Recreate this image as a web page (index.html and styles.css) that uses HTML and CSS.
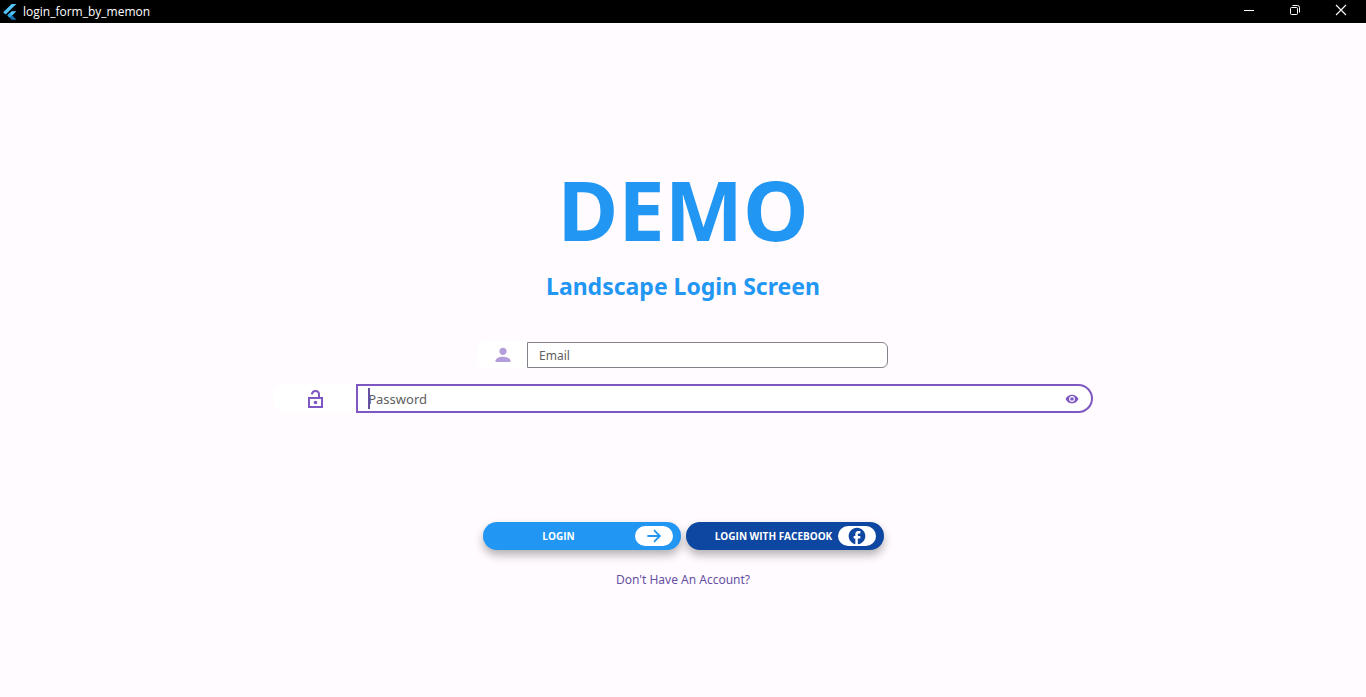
FILE: index.html
```html
<!DOCTYPE html>
<html lang="en">
<head>
<meta charset="utf-8">
<title>login_form_by_memon</title>
<link rel="stylesheet" href="styles.css">
</head>
<body>
<header class="titlebar">
  <svg class="app-logo" width="14" height="16" viewBox="0 0 14 16" aria-hidden="true">
    <path d="M8.6 0H13.4L2.6 10.6L0.2 8.2Z" fill="#54c5f8"/>
    <path d="M8.6 7.2H13.4L9.2 11.4L6.8 13.6L4.4 11.4Z" fill="#54c5f8"/>
    <path d="M6.8 13.8L9.2 11.4L13.4 15.8H8.8Z" fill="#1976b8"/>
    <path d="M4.4 11.4L6.8 9L9.2 11.4L6.8 13.8Z" fill="#29a5ea"/>
  </svg>
  <span class="app-name">login_form_by_memon</span>
  <div class="window-controls">
    <button class="window-button" type="button" aria-label="Minimize">
      <svg width="12" height="12" viewBox="0 0 12 12"><path d="M1 6.5H11" stroke="#fff"/></svg>
    </button>
    <button class="window-button" type="button" aria-label="Restore">
      <svg width="12" height="12" viewBox="0 0 12 12" fill="none" stroke="#fff"><rect x="1.5" y="3.5" width="7" height="7" rx="1"/><path d="M3.5 1.5H8.5Q10.5 1.5 10.5 3.5V8.5"/></svg>
    </button>
    <button class="window-button" type="button" aria-label="Close">
      <svg width="12" height="12" viewBox="0 0 12 12"><path d="M1 1L11 11M11 1L1 11" stroke="#fff" stroke-width="1.1"/></svg>
    </button>
  </div>
</header>
<main class="screen">
  <h1 class="title">DEMO</h1>
  <h2 class="subtitle">Landscape Login Screen</h2>
  <form class="form">
    <div class="field field-email">
      <label class="field-icon" for="email" aria-label="Email">
        <svg width="20" height="20" viewBox="0 0 24 24" fill="#b39ddb"><path d="M12 12c2.400 0 4.400-2 4.400-4.400S14.400 3.200 12 3.200 7.600 5.200 7.600 7.600 9.600 12 12 12zm0 2c-4.500 0-9 1.800-9 5v1.500h18V19c0-3.200-4.500-5-9-5z"/></svg>
      </label>
      <div class="field-box">
        <input class="field-input" id="email" type="email" placeholder="Email">
      </div>
    </div>
    <div class="field field-password">
      <label class="field-icon" for="password" aria-label="Password">
        <svg width="20" height="20" viewBox="0 0 20 20" fill="none" stroke="#7e57c2" stroke-width="2"><path d="M4 9H17V18H4Z"/><path d="M7 5.500C7 3.500 8.200 2 10.500 2S14 3.500 14 5.500V9"/><circle cx="10.500" cy="13.500" r="1.800" fill="#7e57c2" stroke="none"/></svg>
      </label>
      <div class="field-box">
        <span class="caret"></span>
        <input class="field-input" id="password" type="password" placeholder="Password">
        <button class="reveal" type="button" aria-label="Show password">
          <svg width="14" height="14" viewBox="0 0 24 24" fill="#7e57c2"><path d="M12 4.500C7 4.500 2.730 7.610 1 12c1.730 4.390 6 7.500 11 7.500s9.270-3.110 11-7.500c-1.730-4.390-6-7.500-11-7.500zM12 17c-2.760 0-5-2.240-5-5s2.240-5 5-5 5 2.240 5 5-2.240 5-5 5zm0-8c-1.660 0-3 1.340-3 3s1.340 3 3 3 3-1.340 3-3-1.340-3-3-3z"/></svg>
        </button>
      </div>
    </div>
    <div class="actions">
      <button class="action action-login" type="submit">
        <span class="action-label">LOGIN</span>
        <span class="pill"><svg width="20" height="20" viewBox="0 0 24 24" fill="none" stroke="#2196f3" stroke-width="2.200"><path d="M4 12H19M12 5L19 12L12 19"/></svg></span>
      </button>
      <button class="action action-facebook" type="button">
        <span class="action-label">LOGIN WITH FACEBOOK</span>
        <span class="pill"><svg width="20" height="20" viewBox="0 0 24 24" fill="#0d47a1"><path d="M22 12c0-5.520-4.480-10-10-10S2 6.480 2 12c0 4.840 3.440 8.870 8 9.800V15H8v-3h2V9.500C10 7.570 11.570 6 13.500 6H16v3h-2c-.55 0-1 .45-1 1v2h3v3h-3v6.950c5.050-.5 9-4.760 9-9.950z"/></svg></span>
      </button>
    </div>
  </form>
  <a class="signup" href="#">Don't Have An Account?</a>
</main>
</body>
</html>
```

FILE: styles.css
```css
* {
  box-sizing: border-box;
}

body {
  margin: 0;
  min-height: 100vh;
  display: flex;
  flex-direction: column;
  background: #fffbff;
  font-family: "Noto Sans", "Open Sans", sans-serif;
}

button {
  border: 0;
  padding: 0;
  font: inherit;
  cursor: pointer;
}

svg {
  display: block;
  flex: none;
}

.titlebar {
  display: flex;
  align-items: center;
  gap: 6px;
  height: 23px;
  padding-left: 3px;
  background: #000;
  color: #fff;
}

.app-name {
  flex: 1;
  font-family: "Open Sans", "Noto Sans", sans-serif;
  font-size: 12px;
  line-height: 20px;
}

.window-controls {
  display: flex;
  align-self: stretch;
  padding-right: 2px;
}

.window-button {
  display: flex;
  align-items: flex-start;
  justify-content: center;
  width: 46px;
  padding-top: 4px;
  background: transparent;
}

.screen {
  flex: 1;
  display: flex;
  flex-direction: column;
  align-items: center;
  justify-content: center;
  padding-top: 24px;
}

.title {
  margin: 0;
  color: #2196f3;
  font-size: 83px;
  line-height: 110px;
  font-weight: 700;
}

.subtitle {
  margin: 6px 0 40px;
  color: #2196f3;
  font-size: 23px;
  line-height: 32px;
  font-weight: 700;
}

.form {
  width: 100%;
  display: flex;
  flex-direction: column;
  align-items: center;
}

.field {
  display: flex;
  background: #fff;
}

.field-email {
  width: 30%;
  height: 26px;
  margin-bottom: 16px;
  border-radius: 6px;
  font-size: 12px;
}

.field-password {
  width: 60%;
  height: 29px;
  border-radius: 15px;
  font-size: 13px;
}

.field-icon {
  display: flex;
  align-items: center;
  justify-content: center;
  width: 49px;
}

.field-password .field-icon {
  width: 83px;
}

.field-box {
  position: relative;
  flex: 1;
  display: flex;
  align-items: center;
  padding-left: 11px;
  border: 1px solid #85808a;
  border-radius: 0 6px 6px 0;
}

.field-password .field-box {
  padding: 0 12px 0 10px;
  border: 2px solid #7e57c2;
  border-radius: 0 15px 15px 0;
}

.field-input {
  flex: 1;
  min-width: 0;
  padding: 0;
  border: 0;
  outline: 0;
  background: transparent;
  font: inherit;
  color: #1c1b1f;
}

.field-input::placeholder {
  color: #606060;
  opacity: 1;
}

.caret {
  position: absolute;
  left: 10px;
  top: 2px;
  width: 2px;
  height: 21px;
  background: #6750a4;
}

.reveal {
  background: transparent;
}

.actions {
  display: flex;
  gap: 5px;
  margin: 109px 0 20px;
}

.action {
  display: flex;
  align-items: center;
  width: 198px;
  height: 28px;
  padding-right: 8px;
  border-radius: 14px;
  color: #fff;
  font-family: "Open Sans", "Noto Sans", sans-serif;
  font-size: 10px;
  font-weight: 700;
  box-shadow: 0 5px 10px rgba(0, 0, 0, 0.3);
}

.action-login {
  background: #2196f3;
}

.action-facebook {
  padding-left: 24px;
  background: #0d47a1;
}

.action-label {
  flex: 1;
  white-space: nowrap;
}

.pill {
  display: flex;
  align-items: center;
  justify-content: center;
  width: 38px;
  height: 20px;
  border-radius: 10px;
  background: #fff;
}

.signup {
  color: #6750a4;
  font-size: 12px;
  line-height: 20px;
  text-decoration: none;
}
```
